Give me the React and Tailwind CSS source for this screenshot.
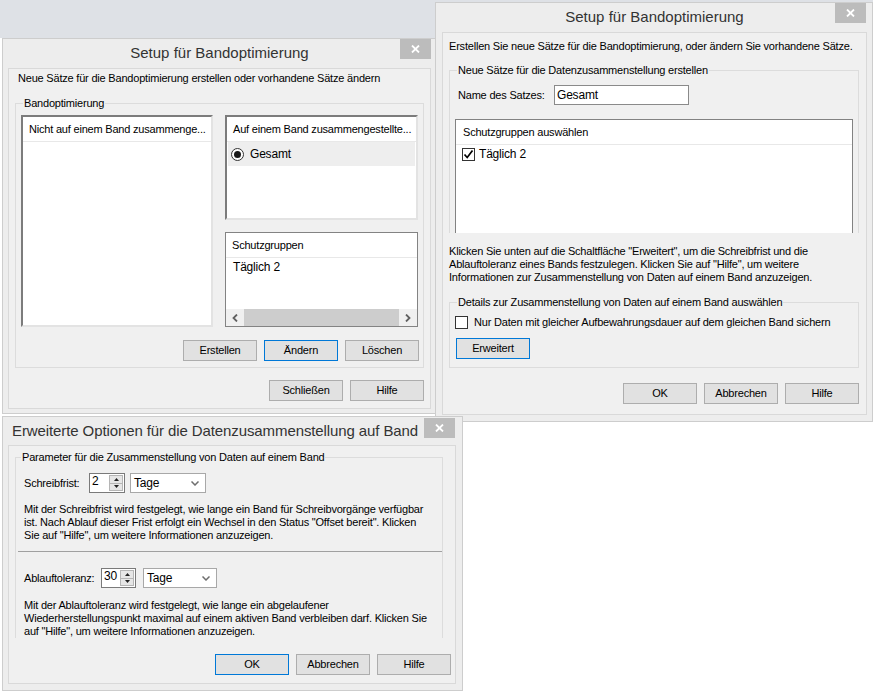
import React from 'react'

const FONT = "font-['Liberation_Sans',Arial,sans-serif]"

function CloseX() {
  return (
    <svg width="9" height="8" viewBox="0 0 9 8">
      <path d="M1 0.5 L8 7.5 M8 0.5 L1 7.5" stroke="#fff" strokeWidth="1.8" />
    </svg>
  )
}

function Btn({ children, primary, className = '' }) {
  return (
    <div
      className={`w-[74px] h-[21px] flex items-center justify-center border bg-[#e1e1e1] text-[11px] ${
        primary ? 'border-[#0078d7]' : 'border-[#adadad]'
      } ${className}`}
    >
      {children}
    </div>
  )
}

function Check({ checked }) {
  return (
    <div className="w-[13px] h-[13px] border border-[#333] bg-white flex items-center justify-center shrink-0">
      {checked && (
        <svg width="11" height="11" viewBox="0 0 11 11">
          <path d="M1.5 5.5 L4.2 8.5 L9.5 1.5" fill="none" stroke="#000" strokeWidth="1.7" />
        </svg>
      )}
    </div>
  )
}

function Spin({ value, w }) {
  return (
    <div className={`${w} h-[20px] border border-[#7a7a7a] bg-white flex`}>
      <span className="flex-1 pl-[2px] text-[12px] leading-[15px]">{value}</span>
      <div className="w-[15px] flex flex-col py-[1px] pr-[1px]">
        <div className="flex-1 bg-[#e6e6e6] border border-[#b5b5b5] flex items-center justify-center">
          <svg width="5" height="3" viewBox="0 0 5 3"><path d="M0 3 L2.5 0 L5 3 Z" fill="#222" /></svg>
        </div>
        <div className="flex-1 bg-[#e6e6e6] border border-t-0 border-[#b5b5b5] flex items-center justify-center">
          <svg width="5" height="3" viewBox="0 0 5 3"><path d="M0 0 L2.5 3 L5 0 Z" fill="#222" /></svg>
        </div>
      </div>
    </div>
  )
}

function Drop({ w }) {
  return (
    <div className={`${w} h-[20px] border border-[#a8a8a8] bg-white flex items-center pl-[3px] pr-[6px]`}>
      <span className="flex-1 text-[12px]">Tage</span>
      <svg width="8" height="5" viewBox="0 0 8 5">
        <path d="M0.5 0.5 L4 4 L7.5 0.5" fill="none" stroke="#6e6e6e" strokeWidth="1.5" />
      </svg>
    </div>
  )
}

function Legend({ children, left = 'left-[7px]' }) {
  return (
    <span className={`absolute ${left} -top-[8px] px-[1px] bg-[#f0f0f0] leading-[14px] whitespace-nowrap`}>
      {children}
    </span>
  )
}

function ListHeader({ children, className = '' }) {
  return (
    <div className={`h-[25px] shrink-0 flex items-center pl-[6px] border-b border-[#e8e8e8] whitespace-nowrap ${className}`}>
      {children}
    </div>
  )
}

function Window1() {
  return (
    <div className="absolute left-[2px] top-[38px] w-[434px] h-[376px] bg-[#ededed] border border-[#cdcdcd] flex flex-col pl-[5px] pr-[4px] pb-[4px]">
      <div className="h-[29px] shrink-0 flex items-center justify-center text-[15px] tracking-normal text-[#333]">
        Setup für Bandoptimierung
      </div>
      <div className="absolute top-0 right-[4px] w-[31px] h-[20px] bg-[#bcbcbc] flex items-center justify-center">
        <CloseX />
      </div>
      <div className="flex-1 border border-[#d9d9d9] bg-[#f0f0f0] flex flex-col">
        <div className="pl-[9px] pt-[2px] leading-[14px] whitespace-nowrap">
          Neue Sätze für die Bandoptimierung erstellen oder vorhandene Sätze ändern
        </div>
        <div className="relative ml-[6px] mt-[18px] w-[409px] h-[265px] border border-[#dcdcdc] pt-[11px] pl-[5px] pr-[4px]">
          <Legend>Bandoptimierung</Legend>
          <div className="flex gap-[12px]">
            <div className="w-[192px] h-[212px] bg-white border-2 border-t-[#7c7c7c] border-l-[#7c7c7c] border-r-[#e3e3e3] border-b-[#e3e3e3] flex flex-col">
              <ListHeader>Nicht auf einem Band zusammenge...</ListHeader>
            </div>
            <div className="w-[193px] flex flex-col gap-[12px]">
              <div className="h-[105px] bg-white border-2 border-t-[#7c7c7c] border-l-[#7c7c7c] border-r-[#e3e3e3] border-b-[#e3e3e3] flex flex-col">
                <ListHeader>Auf einem Band zusammengestellte...</ListHeader>
                <div className="ml-[1px] mr-[1px] h-[24px] bg-[#eeeeee] flex items-center pl-[3px] gap-[6px] text-[12px]">
                  <div className="w-[13px] h-[13px] rounded-full border border-[#333] bg-white flex items-center justify-center">
                    <div className="w-[7px] h-[7px] rounded-full bg-[#1a1a1a]" />
                  </div>
                  Gesamt
                </div>
              </div>
              <div className="h-[95px] bg-white border border-[#838383] flex flex-col">
                <ListHeader>Schutzgruppen</ListHeader>
                <div className="pl-[7px] pt-[2px] leading-[14px] text-[12px]">Täglich 2</div>
                <div className="mt-auto h-[17px] flex items-stretch bg-[#f0f0f0]">
                  <div className="w-[18px] flex items-center justify-center">
                    <svg width="6" height="8" viewBox="0 0 6 8"><path d="M5 0.5 L1.5 4 L5 7.5" fill="none" stroke="#606060" strokeWidth="1.8" /></svg>
                  </div>
                  <div className="w-[155px] bg-[#cdcdcd]" />
                  <div className="flex-1 flex items-center justify-center">
                    <svg width="6" height="8" viewBox="0 0 6 8"><path d="M1 0.5 L4.5 4 L1 7.5" fill="none" stroke="#606060" strokeWidth="1.8" /></svg>
                  </div>
                </div>
              </div>
            </div>
          </div>
          <div className="flex justify-end gap-[7px] mt-[13px]">
            <Btn>Erstellen</Btn>
            <Btn primary>Ändern</Btn>
            <Btn>Löschen</Btn>
          </div>
        </div>
        <div className="flex justify-end gap-[7px] mt-[12px] pr-[6px]">
          <Btn>Schließen</Btn>
          <Btn>Hilfe</Btn>
        </div>
      </div>
    </div>
  )
}

function Window2() {
  return (
    <div className="absolute left-[435px] top-[2px] w-[438px] h-[420px] bg-[#ededed] border border-[#cdcdcd] flex flex-col pl-[6px] pr-[5px] pb-[6px]">
      <div className="h-[29px] shrink-0 flex items-center justify-center text-[15px] tracking-normal text-[#333]">
        Setup für Bandoptimierung
      </div>
      <div className="absolute top-0 right-[6px] w-[31px] h-[20px] bg-[#bcbcbc] flex items-center justify-center">
        <CloseX />
      </div>
      <div className="flex-1 border border-[#d9d9d9] bg-[#f0f0f0] flex flex-col">
        <div className="pl-[6px] pt-[6px] leading-[14px] whitespace-nowrap">
          Erstellen Sie neue Sätze für die Bandoptimierung, oder ändern Sie vorhandene Sätze.
        </div>
        <div className="relative ml-[6px] mt-[17px] w-[410px] h-[163px] border border-b-0 border-[#dcdcdc]">
          <Legend>Neue Sätze für die Datenzusammenstellung erstellen</Legend>
          <div className="h-[162px] overflow-hidden pt-[14px] px-[5px]">
            <div className="flex items-center ml-[3px]">
              <span className="w-[96px]">Name des Satzes:</span>
              <div className="w-[135px] h-[20px] border border-[#8a8a8a] bg-white flex items-center pl-[2px] text-[12px]">
                Gesamt
              </div>
            </div>
            <div className="mt-[14px] h-[200px] bg-white border border-[#828282] flex flex-col">
              <ListHeader className="pl-[7px] border-[#e3ebf5]">Schutzgruppen auswählen</ListHeader>
              <div className="mt-[2px] pl-[6px] flex items-center gap-[4px] text-[12px] h-[14px]">
                <Check checked />
                Täglich 2
              </div>
            </div>
          </div>
        </div>
        <div className="mt-[12px] pl-[6px] leading-[13px] whitespace-nowrap">
          Klicken Sie unten auf die Schaltfläche "Erweitert", um die Schreibfrist und die
          <br />
          Ablauftoleranz eines Bands festzulegen. Klicken Sie auf "Hilfe", um weitere
          <br />
          Informationen zur Zusammenstellung von Daten auf einem Band anzuzeigen.
        </div>
        <div className="relative ml-[6px] mt-[18px] w-[410px] h-[66px] border border-[#dcdcdc] pt-[13px] pl-[5px]">
          <Legend>Details zur Zusammenstellung von Daten auf einem Band auswählen</Legend>
          <div className="flex items-center gap-[6px] h-[13px]">
            <Check />
            <span className="whitespace-nowrap">Nur Daten mit gleicher Aufbewahrungsdauer auf dem gleichen Band sichern</span>
          </div>
          <Btn primary className="mt-[9px] ml-[1px]">Erweitert</Btn>
        </div>
        <div className="flex justify-end gap-[7px] mt-[15px] pr-[7px]">
          <Btn>OK</Btn>
          <Btn>Abbrechen</Btn>
          <Btn>Hilfe</Btn>
        </div>
      </div>
    </div>
  )
}

function Window3() {
  return (
    <div className="absolute left-[2px] top-[416px] w-[461px] h-[275px] bg-[#ededed] border border-[#cdcdcd] flex flex-col pl-[5px] pr-[6px] pb-[6px]">
      <div className="h-[28px] shrink-0 flex items-center pl-[4px] text-[15px] tracking-[-0.1px] text-[#333] whitespace-nowrap">
        Erweiterte Optionen für die Datenzusammenstellung auf Band
      </div>
      <div className="absolute top-[1px] right-[7px] w-[31px] h-[20px] bg-[#bcbcbc] flex items-center justify-center">
        <CloseX />
      </div>
      <div className="flex-1 border border-[#d9d9d9] bg-[#f0f0f0] flex flex-col">
        <div className="relative ml-[6px] mt-[11px] w-[428px] h-[181px] border border-b-0 border-[#dcdcdc]">
          <Legend left="left-[5px]">Parameter für die Zusammenstellung von Daten auf einem Band</Legend>
          <div className="h-[180px] overflow-hidden pt-[15px] pl-[8px]">
            <div className="flex items-center">
              <span className="w-[65px]">Schreibfrist:</span>
              <Spin value="2" w="w-[36px]" />
              <div className="ml-[5px]"><Drop w="w-[76px]" /></div>
            </div>
            <div className="mt-[10px] leading-[13px] whitespace-nowrap">
              Mit der Schreibfrist wird festgelegt, wie lange ein Band für Schreibvorgänge verfügbar
              <br />
              ist. Nach Ablauf dieser Frist erfolgt ein Wechsel in den Status "Offset bereit". Klicken
              <br />
              Sie auf "Hilfe", um weitere Informationen anzuzeigen.
            </div>
            <div className="mt-[9px] -ml-[6px] h-px bg-[#a0a0a0]" />
            <div className="flex items-center mt-[16px]">
              <span className="w-[77px]">Ablauftoleranz:</span>
              <Spin value="30" w="w-[35px]" />
              <div className="ml-[7px]"><Drop w="w-[74px]" /></div>
            </div>
            <div className="mt-[11px] leading-[13px] whitespace-nowrap">
              Mit der Ablauftoleranz wird festgelegt, wie lange ein abgelaufener
              <br />
              Wiederherstellungspunkt maximal auf einem aktiven Band verbleiben darf. Klicken Sie
              <br />
              auf "Hilfe", um weitere Informationen anzuzeigen.
            </div>
          </div>
        </div>
        <div className="flex justify-end gap-[7px] mt-[16px] pr-[4px]">
          <Btn primary>OK</Btn>
          <Btn>Abbrechen</Btn>
          <Btn>Hilfe</Btn>
        </div>
      </div>
    </div>
  )
}

export default function App() {
  return (
    <div className={`relative w-[873px] h-[692px] overflow-hidden bg-white text-[11px] tracking-[-0.2px] text-black ${FONT}`}>
      <div className="h-[38px] bg-[#dee1e6]" />
      <Window1 />
      <Window2 />
      <Window3 />
    </div>
  )
}
